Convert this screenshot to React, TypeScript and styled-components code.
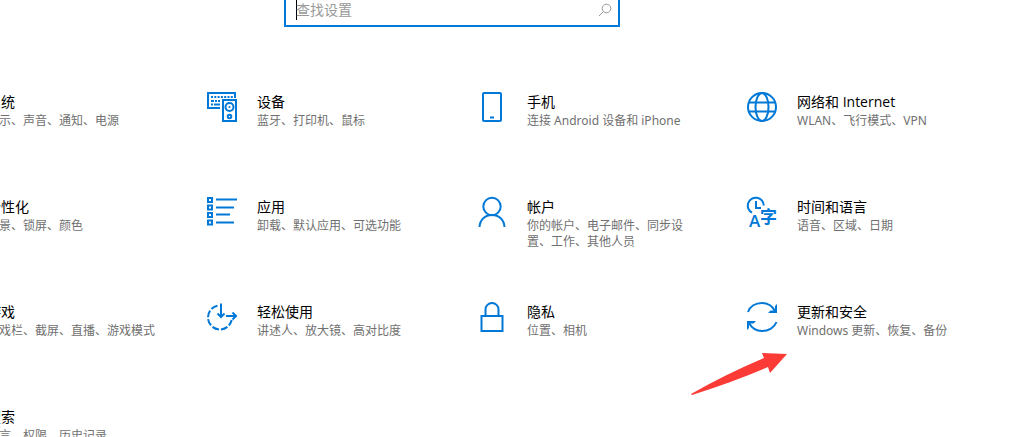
import React from "react";
import styled, { createGlobalStyle } from "styled-components";

const GlobalStyle = createGlobalStyle`
  * { box-sizing: border-box; }
  body {
    margin: 0;
    background: #fff;
    color: #000;
    font-family: "Noto Sans", "Noto Sans CJK SC", sans-serif;
  }
`;

const Page = styled.main`
  height: 100vh;
  overflow: hidden;
`;

const SearchRow = styled.form`
  display: flex;
  justify-content: center;
  margin-top: -7px;
  padding-right: 107px;
`;

const SearchBox = styled.label`
  display: flex;
  align-items: center;
  width: 336px;
  height: 34px;
  padding: 0 6px 0 10px;
  border: 2px solid #0078d7;
`;

const Caret = styled.span`
  width: 1px;
  height: 20px;
  margin-right: -1px;
  background: #000;
`;

const SearchInput = styled.input`
  flex: 1;
  min-width: 0;
  padding: 0;
  border: 0;
  outline: 0;
  background: transparent;
  font-family: inherit;
  font-size: 14px;
  line-height: 20px;
  &::placeholder {
    color: #999;
    opacity: 1;
  }
`;

const SearchIcon = styled.svg`
  flex: none;
  width: 14px;
  height: 14px;
  fill: none;
  stroke: #999;
`;

const Grid = styled.nav`
  display: grid;
  grid-template-columns: repeat(4, 1fr);
  grid-auto-rows: minmax(105px, auto);
  margin: 65px -6px 0 -63px;
`;

const Tile = styled.a`
  position: relative;
  display: flex;
  align-items: flex-start;
  gap: 20px;
  color: inherit;
  text-decoration: none;
`;

const Icon = styled.svg`
  flex: none;
  width: 30px;
  height: 30px;
  overflow: visible;
  fill: none;
  stroke: #0078d7;
  stroke-width: 2;
`;

const Label = styled.span`
  display: flex;
  flex-direction: column;
  gap: 1px;
  width: 170px;
`;

const Title = styled.span`
  font-family: "Open Sans", "Noto Sans CJK SC", sans-serif;
  font-size: 14px;
  line-height: 20px;
`;

const Description = styled.span`
  color: #707070;
  font-size: 12px;
  line-height: 16px;
  white-space: pre-line;
`;

const Pointer = styled.svg`
  position: absolute;
  left: -56px;
  top: 50px;
  width: 97px;
  height: 44px;
  fill: #fc3a36;
`;

const solid = { fill: "#0078d7", stroke: "none" };

const icons: Record<string, React.ReactNode> = {
  system: <path d="M1 4h28v18H1zM8 27h14" />,
  personal: <path d="M3 27l6-2L28 5l-3-3L6 21z" />,
  game: <path d="M1 8h28v15H1zM8 12v7M5 15h7" />,
  search: <path d="M2 28l10-10M11 11a8 8 0 1 0 16 0a8 8 0 1 0-16 0" />,
  devices: (
    <>
      <path d="M13 16H1V1h27v5" />
      <path d="M4 5h22" strokeDasharray="2 1.3" />
      <path d="M4 9h3M8 9h2M11 9h2M4 12.5h2M7 12.5h6" />
      <rect x="16" y="8" width="13" height="21" />
      <circle cx="22.5" cy="15" r="4" />
      <circle cx="22.5" cy="15" r="1" {...solid} />
      <circle cx="22.5" cy="24.5" r="1.8" />
    </>
  ),
  phone: (
    <>
      <rect x="6" y="1" width="18" height="28" rx="1" />
      <path d="M13 25.5h4" />
    </>
  ),
  network: (
    <>
      <circle cx="15" cy="15" r="14" />
      <ellipse cx="15" cy="15" rx="6.5" ry="14" />
      <path d="M2 10.5h26M2 19.5h26" />
    </>
  ),
  apps: (
    <>
      <path d="M1 1h4v4H1zM1 8.5h4v4H1zM1 16h4v4H1zM1 23.5h4v4H1z" />
      <path d="M9 2.5h21M9 10.5h18M9 17.5h14M9 25.5h18" />
    </>
  ),
  account: (
    <>
      <circle cx="15" cy="9.5" r="8.7" />
      <path d="M2.5 30C3 22.5 8 18 15 18S27 22.5 27.5 30" />
    </>
  ),
  time: (
    <>
      <path d="M5 15.7A8 8 0 1 1 16.8 8.5" />
      <path d="M9 4v7h5" />
      <text x="2" y="30" fontFamily="Open Sans, sans-serif" fontSize="17" fontWeight="600" {...solid}>A</text>
      <text x="13" y="26" fontFamily="Noto Sans CJK SC, sans-serif" fontSize="17" fontWeight="600" {...solid}>字</text>
    </>
  ),
  ease: (
    <>
      <path d="M10.5 3.7A12 12 0 1 0 24.7 18" strokeDasharray="7 2" />
      <path d="M14 1.5V15M10.5 11.5L14 15l3.5-3.5M19 14h10M25.5 10.5L29 14l-3.5 3.5" />
    </>
  ),
  privacy: (
    <>
      <rect x="4.5" y="14" width="21" height="15" />
      <path d="M8.5 14V7.5a6.5 6.5 0 0 1 13 0V14" />
    </>
  ),
  update: (
    <>
      <path d="M1 10C3 4.5 8.5 1 15 1c5.5 0 10 2.5 13 8M29.5 20C27.5 25.5 21.5 29 15 29c-5.5 0-10-2.5-13-8" />
      <path d="M30 2v9h-9l2.5-2.5H28V4zM0 28v-9h9l-2.5 2.5H2V26z" {...solid} />
    </>
  ),
};

const tiles = [
  ["system", "系统", "显示、声音、通知、电源"],
  ["devices", "设备", "蓝牙、打印机、鼠标"],
  ["phone", "手机", "连接 Android 设备和 iPhone"],
  ["network", "网络和 Internet", "WLAN、飞行模式、VPN"],
  ["personal", "个性化", "背景、锁屏、颜色"],
  ["apps", "应用", "卸载、默认应用、可选功能"],
  ["account", "帐户", "你的帐户、电子邮件、同步设\n置、工作、其他人员"],
  ["time", "时间和语言", "语音、区域、日期"],
  ["game", "游戏", "游戏栏、截屏、直播、游戏模式"],
  ["ease", "轻松使用", "讲述人、放大镜、高对比度"],
  ["privacy", "隐私", "位置、相机"],
  ["update", "更新和安全", "Windows 更新、恢复、备份"],
  ["search", "搜索", "语言、权限、历史记录"],
];

export default function App() {
  return (
    <Page>
      <GlobalStyle />
      <SearchRow>
        <SearchBox>
          <Caret />
          <SearchInput type="text" placeholder="查找设置" aria-label="查找设置" />
          <SearchIcon viewBox="0 0 14 14" aria-hidden="true">
            <circle cx="8.5" cy="5.5" r="4.3" />
            <path d="M5.5 8.5L1 13" />
          </SearchIcon>
        </SearchBox>
      </SearchRow>
      <Grid>
        {tiles.map(([id, title, description]) => (
          <Tile href="#" key={id}>
            <Icon viewBox="0 0 30 30" aria-hidden="true">{icons[id]}</Icon>
            <Label>
              <Title>{title}</Title>
              <Description>{description}</Description>
            </Label>
            {id === "update" && (
              <Pointer viewBox="0 0 97 44" aria-hidden="true">
                <path d="M96 2L71 1l2 5Q35 22 0 42l1 1Q45 29 77 15l2 6z" />
              </Pointer>
            )}
          </Tile>
        ))}
      </Grid>
    </Page>
  );
}
